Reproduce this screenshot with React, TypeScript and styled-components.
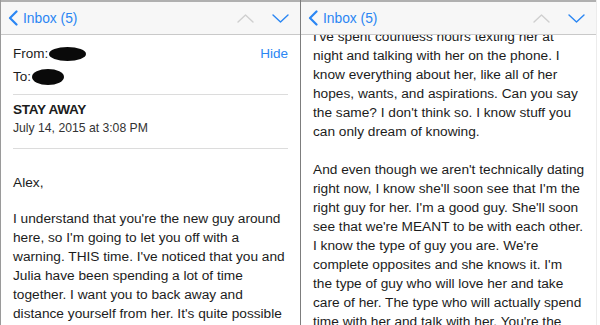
import styled, { createGlobalStyle } from "styled-components";

const Global = createGlobalStyle`
    html, body { margin: 0; padding: 0; background: #fff; }
    body { font-family: "Liberation Sans", Arial, sans-serif; }
`;

const leftLines = [
    "I understand that you're the new guy around",
    "here, so I'm going to let you off with a",
    "warning. THIS time. I've noticed that you and",
    "Julia have been spending a lot of time",
    "together. I want you to back away and",
    "distance yourself from her. It's quite possible",
];

const rightParas = [
    [
        "I've spent countless hours texting her at",
        "night and talking with her on the phone. I",
        "know everything about her, like all of her",
        "hopes, wants, and aspirations. Can you say",
        "the same? I don't think so. I know stuff you",
        "can only dream of knowing.",
    ],
    [
        "And even though we aren't technically dating",
        "right now, I know she'll soon see that I'm the",
        "right guy for her. I'm a good guy. She'll soon",
        "see that we're MEANT to be with each other.",
        "I know the type of guy you are. We're",
        "complete opposites and she knows it. I'm",
        "the type of guy who will love her and take",
        "care of her. The type who will actually spend",
        "time with her and talk with her. You're the",
    ],
];

const BLUE = "#2a86f3";

const Screen = styled.div`
    display: flex;
    width: 600px;
    height: 325px;
    overflow: hidden;
    border-left: 1px solid #9a9a9a;
    box-sizing: border-box;
`;

const Panel = styled.div<{ $last?: boolean }>`
    width: ${(p) => (p.$last ? "295px" : "299px")};
    height: 325px;
    overflow: hidden;
    display: flex;
    flex-direction: column;
    border-right: ${(p) => (p.$last ? "1px solid #ececec" : "1px solid #7d7d7d")};
`;

const Header = styled.div`
    position: relative;
    z-index: 1;
    flex: none;
    height: 32px;
    display: flex;
    align-items: center;
    padding: 0 11px 0 7px;
    background: #f7f7f7;
    border-top: 2px solid #b0b0b0;
    border-bottom: 1px solid #c9c9c9;
`;

const Back = styled.div`
    display: flex;
    align-items: center;
    gap: 5px;
    color: ${BLUE};
    font-size: 13.8px;
`;

const Arrows = styled.div`
    margin-left: auto;
    display: flex;
    align-items: center;
    gap: 18px;
`;

const Body = styled.div<{ $shift?: number }>`
    padding: 0 12px 0 12px;
    margin-top: ${(p) => p.$shift ?? 0}px;
    color: #1c1c1c;
    font-size: 13.7px;
    line-height: 19px;
`;

const MetaRow = styled.div`
    display: flex;
    align-items: center;
    height: 23px;
    font-size: 13.5px;
    color: #1c1c1c;
`;

const Blob = styled.span<{ $w: number; $h: number }>`
    display: inline-block;
    width: ${(p) => p.$w}px;
    height: ${(p) => p.$h}px;
    margin-left: 1px;
    background: #0a0a0a;
    border-radius: 50%;
`;

const HideLink = styled.span`
    margin-left: auto;
    color: ${BLUE};
    font-size: 13.5px;
`;

const Meta = styled.div`
    padding: 7px 0 6px;
    border-bottom: 1px solid #dcdcdc;
`;

const Subject = styled.div`
    padding: 5px 0 10px;
    border-bottom: 1px solid #dcdcdc;
`;

const Title = styled.div`
    font-weight: bold;
    font-size: 13.6px;
    letter-spacing: -0.3px;
    line-height: 19px;
`;

const DateLine = styled.div`
    font-size: 12.2px;
    line-height: 19px;
    color: #333;
`;

const Para = styled.p`
    margin: 0 0 19px;
    white-space: nowrap;
`;

const Greeting = styled(Para)`
    margin: 24px 0 17px;
`;

const ChevLeft = () => (
    <svg width="10" height="16" viewBox="0 0 10 16">
        <polyline points="8.5,1.5 2,8 8.5,14.5" fill="none" stroke={BLUE} strokeWidth="2.2" strokeLinecap="round" strokeLinejoin="round" />
    </svg>
);

const Chev = ({ up, color }: { up?: boolean; color: string }) => (
    <svg width="17" height="9" viewBox="0 0 17 9">
        <polyline
            points={up ? "1,8 8.5,1 16,8" : "1,1 8.5,8 16,1"}
            fill="none"
            stroke={color}
            strokeWidth="1.4"
            strokeLinecap="round"
            strokeLinejoin="round"
        />
    </svg>
);

const Nav = () => (
    <Header>
        <Back>
            <ChevLeft />
            <span>Inbox (5)</span>
        </Back>
        <Arrows>
            <Chev up color="#cfcfcf" />
            <Chev color={BLUE} />
        </Arrows>
    </Header>
);

const Lines = ({ lines }: { lines: string[] }) => (
    <>
        {lines.map((l, i) => (
            <span key={i}>
                {l}
                {i < lines.length - 1 && <br />}
            </span>
        ))}
    </>
);

export default function App() {
    return (
        <>
            <Global />
            <Screen>
                <Panel>
                    <Nav />
                    <Body>
                        <Meta>
                            <MetaRow>
                                From:<Blob $w={37} $h={14} />
                                <HideLink>Hide</HideLink>
                            </MetaRow>
                            <MetaRow>
                                To:<Blob $w={32} $h={16} />
                            </MetaRow>
                        </Meta>
                        <Subject>
                            <Title>STAY AWAY</Title>
                            <DateLine>July 14, 2015 at 3:08 PM</DateLine>
                        </Subject>
                        <Greeting>Alex,</Greeting>
                        <Para>
                            <Lines lines={leftLines} />
                        </Para>
                    </Body>
                </Panel>
                <Panel $last>
                    <Nav />
                    <Body $shift={-8}>
                        {rightParas.map((p, i) => (
                            <Para key={i}>
                                <Lines lines={p} />
                            </Para>
                        ))}
                    </Body>
                </Panel>
            </Screen>
        </>
    );
}
